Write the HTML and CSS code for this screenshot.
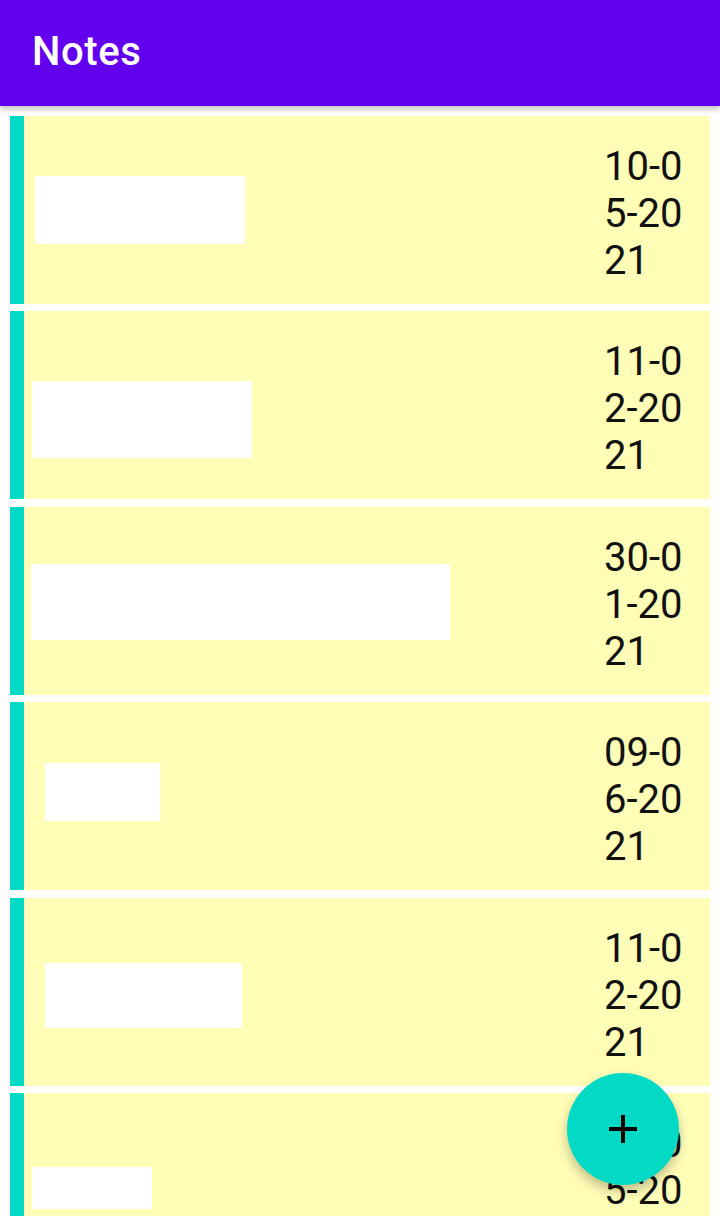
FILE: index.html
```html
<!DOCTYPE html>
<html lang="en">
<head>
  <meta charset="UTF-8">
  <title>Notes</title>
  <link rel="stylesheet" href="styles.css">
</head>
<body>

<div class="app">
  <header class="toolbar">
    <h1>Notes</h1>
  </header>

  <div class="list">
    <div class="note">
      <div class="strip"></div>
      <div class="note-body">
        <div class="title t1"></div>
        <div class="date">10-05-2021</div>
      </div>
    </div>
    <div class="note">
      <div class="strip"></div>
      <div class="note-body">
        <div class="title t2"></div>
        <div class="date">11-02-2021</div>
      </div>
    </div>
    <div class="note">
      <div class="strip"></div>
      <div class="note-body">
        <div class="title t3"></div>
        <div class="date">30-01-2021</div>
      </div>
    </div>
    <div class="note">
      <div class="strip"></div>
      <div class="note-body">
        <div class="title t4"></div>
        <div class="date">09-06-2021</div>
      </div>
    </div>
    <div class="note">
      <div class="strip"></div>
      <div class="note-body">
        <div class="title t5"></div>
        <div class="date">11-02-2021</div>
      </div>
    </div>
    <div class="note">
      <div class="strip"></div>
      <div class="note-body">
        <div class="title t6"></div>
        <div class="date">10-05-2021</div>
      </div>
    </div>
  </div>

  <button class="fab" aria-label="Add note">
    <svg width="48" height="48" viewBox="0 0 24 24">
      <path d="M19 13h-6v6h-2v-6H5v-2h6V5h2v6h6v2z" fill="#000"/>
    </svg>
  </button>
</div>

</body>
</html>
```

FILE: styles.css
```css
* {
  box-sizing: border-box;
}
body {
  margin: 0;
  font-family: Roboto, 'Noto Sans', sans-serif;
  background: white;
}
.app {
  position: relative;
  width: 720px;
  height: 1226px;
  overflow: hidden;
}
.toolbar {
  position: relative;
  z-index: 1;
  height: 106px;
  padding: 28px 32px 0;
  background: #6200ee;
  box-shadow: 0 3px 6px rgba(0, 0, 0, 0.25);
}
.toolbar h1 {
  margin: 0;
  font-size: 40px;
  font-weight: 500;
  letter-spacing: 0.6px;
  line-height: normal;
  color: white;
}
.list {
  height: 1110px;
  overflow: hidden;
  padding: 10px 10px 0;
  display: flex;
  flex-direction: column;
  gap: 7.4px;
}
.note {
  flex: none;
  display: flex;
  height: 188px;
}
.strip {
  width: 14px;
  background: #03dac5;
}
.note-body {
  flex: 1;
  display: flex;
  align-items: center;
  background: #fffdb6;
}
.title {
  background: white;
  align-self: center;
}
.t1 { width: 210px; height: 68px; margin-left: 11px; }
.t2 { width: 220px; height: 77px; margin-left: 8px; margin-top: 29px; }
.t3 { width: 419px; height: 76px; margin-left: 7px; margin-top: 2px; }
.t4 { width: 115px; height: 58px; margin-left: 21px; margin-top: -8px; }
.t5 { width: 197px; height: 65px; margin-left: 21px; margin-top: 7px; }
.t6 { width: 120px; height: 42px; margin-left: 8px; margin-top: 2px; }
.date {
  align-self: flex-start;
  margin-left: auto;
  margin-right: 22px;
  margin-top: 27px;
  width: 84px;
  font-size: 40px;
  line-height: normal;
  color: #111;
  word-break: break-all;
}
.fab {
  position: absolute;
  right: 41px;
  bottom: 41px;
  width: 112px;
  height: 112px;
  border: none;
  border-radius: 50%;
  background: #03dac5;
  display: flex;
  align-items: center;
  justify-content: center;
  box-shadow: 0 6px 12px rgba(0, 0, 0, 0.25);
  cursor: pointer;
}
```
